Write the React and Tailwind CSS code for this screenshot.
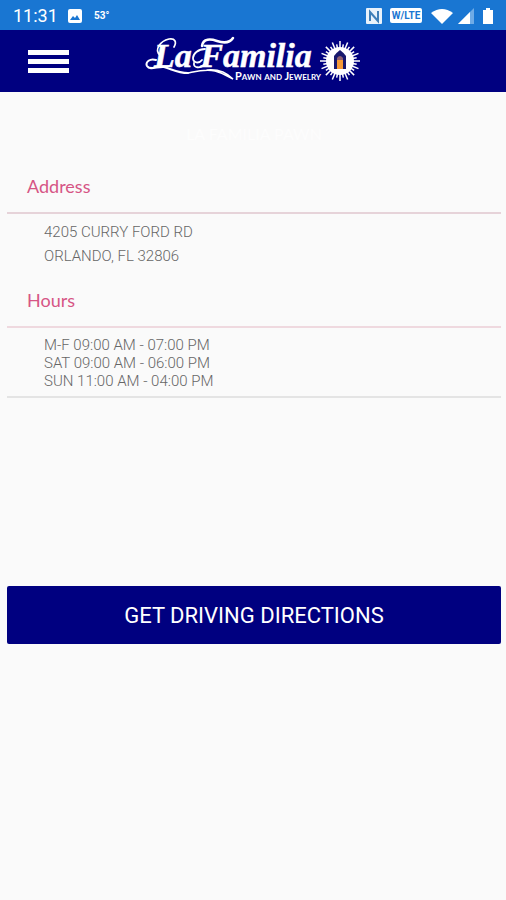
import React from 'react';

const address = ['4205 CURRY FORD RD', 'ORLANDO, FL 32806'];

const hours = [
  'M-F 09:00 AM - 07:00 PM',
  'SAT 09:00 AM - 06:00 PM',
  'SUN 11:00 AM - 04:00 PM',
];

const rays = Array.from({ length: 32 }, (_, i) => {
  const angle = (i * Math.PI) / 16;
  const outer = i % 2 ? 17 : 20;
  return {
    x1: 195 + 11 * Math.cos(angle),
    y1: 25 + 11 * Math.sin(angle),
    x2: 195 + outer * Math.cos(angle),
    y2: 25 + outer * Math.sin(angle),
  };
});

const StatusBar = () => (
  <div className="flex h-[30px] items-center justify-between bg-[#1976d2] pl-[13px] pr-3 pt-px text-white">
    <div className="flex items-center">
      <span className="w-[55px] font-['Roboto',sans-serif] text-[18px] leading-[20px]">11:31</span>
      <svg className="h-[14px] w-[14px]" viewBox="0 0 14 14">
        <rect width="14" height="14" rx="2" fill="#fff" />
        <path d="M2 11l3-4 2 2 2-3 3 5z" fill="#1976d2" />
      </svg>
      <span className="ml-3 font-['Roboto',sans-serif] text-[10px] font-bold leading-[20px]">53°</span>
    </div>
    <div className="flex items-center">
      <svg className="h-4 w-4" viewBox="0 0 16 16">
        <rect width="16" height="16" rx="1" fill="#e8f2fb" />
        <path d="M4 13V4l8 9V3" fill="none" stroke="#3f7fb8" strokeWidth="2" />
      </svg>
      <span className="ml-2 flex h-[15px] w-8 items-center justify-center rounded-xs bg-white font-['Roboto',sans-serif] text-[10px] font-bold text-[#1976d2]">
        W/LTE
      </span>
      <svg className="ml-2 h-4 w-6" viewBox="0 0 24 16">
        <path d="M1 5Q12-3 23 5L12 16z" fill="#fff" />
      </svg>
      <svg className="ml-1 h-4 w-4" viewBox="0 0 16 16">
        <path d="M0 16L16 0v16z" fill="#6eabe6" />
        <path d="M0 16L12 4v12z" fill="#fff" />
      </svg>
      <svg className="ml-2 h-4 w-3" viewBox="0 0 12 16">
        <path d="M1 2h3V0h4v2h3v14H1z" fill="#fff" />
      </svg>
    </div>
  </div>
);

const Logo = () => (
  <svg className="h-[50px] w-[216px]" viewBox="0 0 216 50" role="img" aria-label="La Familia Pawn and Jewelry">
    <text x="9" y="31" fill="#fff" stroke="#fff" strokeWidth="0.500" className="font-['Liberation_Serif',serif] text-[34px] font-bold italic">
      La Familia
    </text>
    <g fill="none" stroke="#fff" strokeLinecap="round">
      <path d="M15 19C9 14 15 5 24 3c6-1 8 3 5 8" strokeWidth="1.700" />
      <path d="M11 24C5 22 0 26 2 30c3 5 11 0 17 1 8 2 13 6 24 6" strokeWidth="2" />
      <path d="M43 37c10-2 17-4 27-2 8 2 12 5 18 8-8-8-16-10-26-9" strokeWidth="1.500" />
      <path d="M60 13c-7 0-12 5-12 9 0 5 6 6 9 2" strokeWidth="1.800" />
      <path d="M57 10c1-8 9-7 15-5 6 2 12 3 16-3" strokeWidth="2.500" />
      <path d="M60 28c-5 5-12 4-11-1" strokeWidth="1.800" />
    </g>
    <text x="90" y="44" fill="#fff" className="font-['Lato',sans-serif] text-[11px] font-bold [font-variant-caps:small-caps]">
      Pawn and Jewelry
    </text>
    {rays.map((ray, i) => <line key={i} {...ray} stroke="#fff" strokeWidth="1.500" />)}
    <circle cx="195" cy="25" r="14" fill="#fff" />
    <path d="M189 33V20q2-3 6-6 4 3 6 6v13z" fill="#18186c" />
    <path d="M192 33v-9h6v9z" fill="#f59a38" />
    <path d="M192 24v-2q3-4 6 0v2z" fill="#8f6070" />
  </svg>
);

const Header = () => (
  <header className="relative flex h-[62px] items-center justify-center bg-[#000080]">
    <button type="button" aria-label="Menu" className="absolute left-7 flex w-[41px] flex-col gap-1">
      <span className="h-[5px] bg-white" />
      <span className="h-[5px] bg-white" />
      <span className="h-[5px] bg-white" />
    </button>
    <Logo />
  </header>
);

const App = () => (
  <div className="min-h-screen bg-[#fafafa] font-['Lato',sans-serif]">
    <StatusBar />
    <Header />
    <main className="pb-8 pl-[7px] pr-[5px]">
      <h1 className="pt-7 text-center text-[16px] leading-[28px] text-[#fdfdfd]">LA FAMILIA PAWN</h1>
      <section className="pt-6">
        <h2 className="border-b-2 border-[#e6d3d9] pb-3 pl-5 text-[18px] leading-[28px] text-[#d65585]">Address</h2>
        <address className="pl-[37px] pt-[6px] font-['Roboto',sans-serif] text-[15px] font-light not-italic leading-[24px] text-[#666]">
          {address.map((line) => <p key={line}>{line}</p>)}
        </address>
      </section>
      <section className="pt-[18px]">
        <h2 className="border-b-2 border-[#efd9df] pb-3 pl-5 text-[18px] leading-[28px] text-[#d65585]">Hours</h2>
        <div className="border-b-2 border-[#e4e4e4] pb-[6px] pl-[37px] pt-2 font-['Roboto',sans-serif] text-[15px] font-light leading-[18px] text-[#666]">
          {hours.map((line) => <p key={line}>{line}</p>)}
        </div>
      </section>
      <button type="button" className="mt-[188px] h-[58px] w-full rounded-xs bg-[#000080] font-['Roboto',sans-serif] text-[22px] text-white">
        GET DRIVING DIRECTIONS
      </button>
    </main>
  </div>
);

export default App;
